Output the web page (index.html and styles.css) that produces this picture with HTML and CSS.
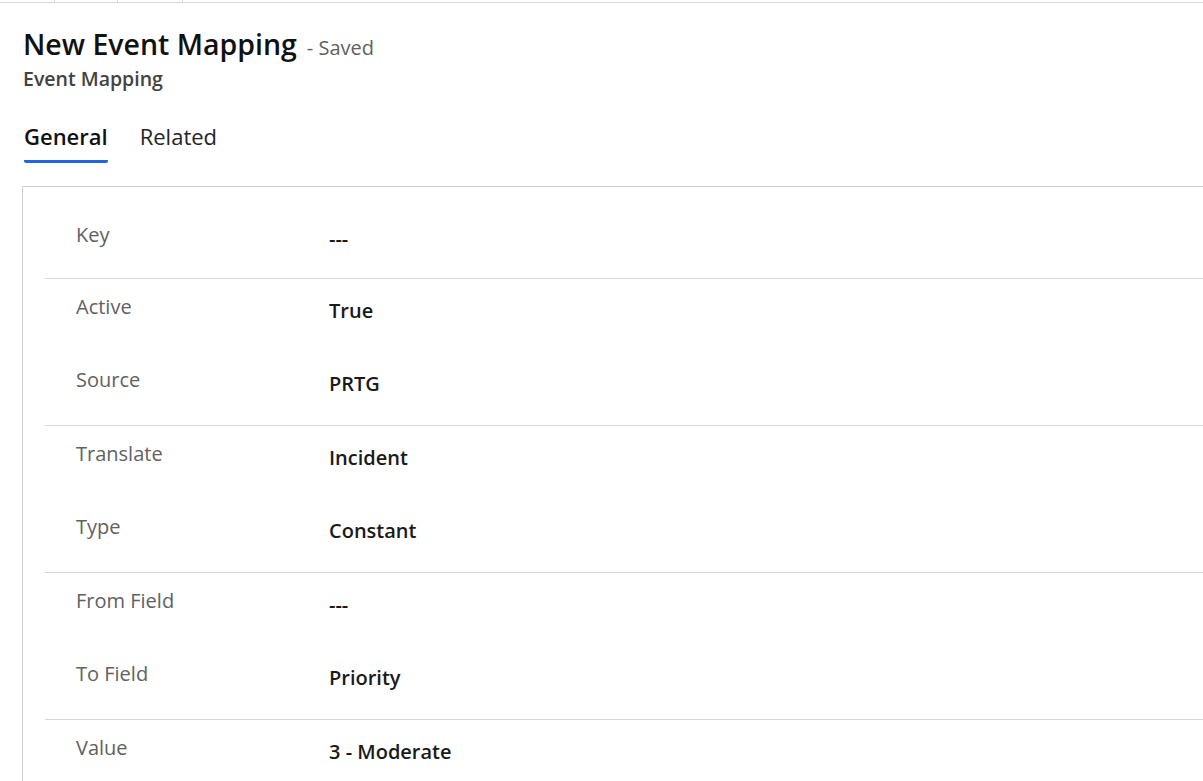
FILE: index.html
```html
<!DOCTYPE html>
<html lang="en">
<head>
<meta charset="utf-8">
<title>New Event Mapping</title>
<link rel="stylesheet" href="styles.css">
</head>
<body>
<div class="topstrip">
  <span class="stub s1"></span><span class="stub s2"></span><span class="stub s3"></span>
</div>
<header class="header">
  <div class="title-row">
    <h1 class="title">New Event Mapping</h1>
    <span class="status">- Saved</span>
  </div>
  <div class="entity">Event Mapping</div>
</header>
<nav class="tabs">
  <div class="tab active">General</div>
  <div class="tab">Related</div>
</nav>
<main class="card">
  <section class="section first">
    <div class="field"><div class="label">Key</div><div class="value">---</div></div>
  </section>
  <section class="section">
    <div class="field"><div class="label">Active</div><div class="value">True</div></div>
    <div class="field"><div class="label">Source</div><div class="value">PRTG</div></div>
  </section>
  <section class="section">
    <div class="field"><div class="label">Translate</div><div class="value">Incident</div></div>
    <div class="field"><div class="label">Type</div><div class="value">Constant</div></div>
  </section>
  <section class="section">
    <div class="field"><div class="label">From Field</div><div class="value">---</div></div>
    <div class="field"><div class="label">To Field</div><div class="value">Priority</div></div>
  </section>
  <section class="section last">
    <div class="field"><div class="label">Value</div><div class="value">3 - Moderate</div></div>
  </section>
</main>
</body>
</html>
```
FILE: styles.css
```css
* { box-sizing: border-box; }
html, body { margin: 0; padding: 0; background: #ffffff; }
body {
  font-family: "Open Sans", "Noto Sans", "Liberation Sans", sans-serif;
  color: #000;
  width: 1203px;
  height: 781px;
  overflow: hidden;
}
.topstrip {
  height: 3px;
  border-bottom: 1px solid #d6d6d6;
  display: flex;
}
.stub { height: 2px; border-right: 1px solid #d6d6d6; }
.s1 { width: 55px; }
.s2 { width: 63px; }
.s3 { width: 65px; }

.header { padding: 22px 0 0 23px; }
.title-row { display: flex; align-items: baseline; gap: 10px; height: 38px; }
.title {
  margin: 0;
  font-size: 28.5px;
  font-weight: 600;
  line-height: 38px;
  color: #111;
}
.status { font-size: 20px; color: #616161; }
.entity {
  margin-top: 3px;
  font-size: 19.5px;
  font-weight: 600;
  color: #424242;
  line-height: 26px;
}

.tabs { display: flex; gap: 32px; padding: 29px 0 0 24px; height: 94px; }
.tab {
  font-size: 22px;
  line-height: 30px;
  color: #242424;
  height: 42px;
}
.tab.active {
  font-weight: 600;
  color: #111;
  border-bottom: 3px solid #2266e3;
  border-radius: 0 0 2px 2px;
}

.card {
  margin-left: 22px;
  border-left: 1px solid #d1d1d1;
  border-top: 1px solid #d1d1d1;
  padding-left: 22px;
}
.section { border-bottom: 1px solid #d6d6d6; }
.section.first { padding-top: 20px; }
.section.first .field { height: 71px; }
.section.last { border-bottom: none; }
.field {
  display: grid;
  grid-template-columns: 253px 1fr;
  padding-left: 31px;
  height: 73px;
}
.label {
  font-size: 20px;
  line-height: 28px;
  padding-top: 14px;
  color: #616161;
}
.value {
  font-size: 20px;
  line-height: 28px;
  padding-top: 18px;
  font-weight: 600;
  color: #1a1a1a;
}
```
